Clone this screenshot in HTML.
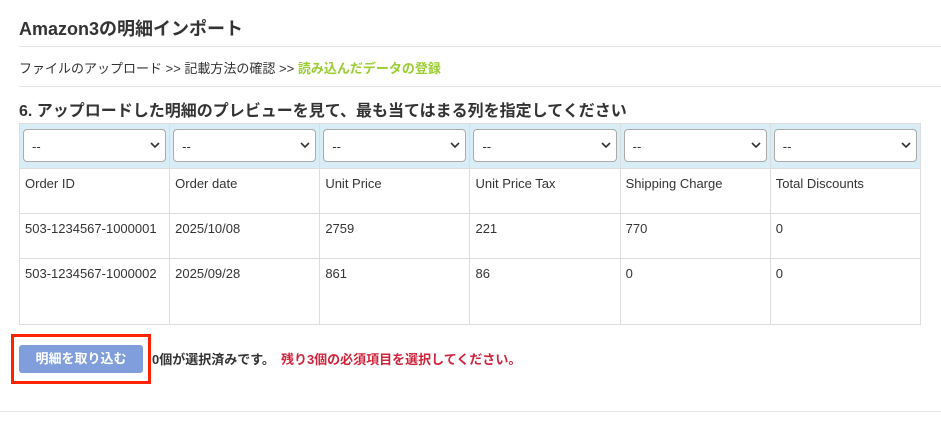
<!DOCTYPE html>
<html><head><meta charset="utf-8"><style>
body{margin:0;width:941px;height:431px;background:#fff;font-family:"Liberation Sans","Noto Sans CJK JP",sans-serif;color:#333;position:relative;overflow:hidden}
.a{position:absolute}
h1{position:absolute;left:19px;top:15px;margin:0;font-size:18px;font-weight:bold;color:#333}
.hr{position:absolute;left:19px;right:0;height:1px;background:#e5e5e5}
.bc{left:19px;top:58px;font-size:13px;color:#333}
.bc b{color:#9acd32}
.h6{left:19px;top:97px;font-size:16px;font-weight:bold}
table{position:absolute;left:19px;top:123px;width:902px;border-collapse:collapse;font-size:13px;table-layout:fixed}
td{border:1px solid #ddd;vertical-align:top;padding:0 5px}
tr.s td{background:#d9edf7;height:45px;padding:5px 3px;box-sizing:border-box}
.sel{height:33px;border:1px solid #aaa;border-radius:4px;background:#fff;position:relative;font-size:13px;line-height:33px;padding-left:8px;box-sizing:border-box}
.sel svg{position:absolute;right:5px;top:12px}
tr.r td{height:45px;padding-top:7px;box-sizing:border-box}
tr.r2 td{height:66px}
.box{left:11px;top:334px;width:134px;height:44px;border:3px solid #ff2200}
.btn{left:19px;top:345px;width:124px;height:28px;background:#7f9edb;border-radius:3px;color:#fff;font-weight:bold;font-size:13px;text-align:center;line-height:28px}
.msg{left:152px;top:349px;font-size:13px;font-weight:bold}
.msg span{color:#d0243c;margin-left:6px}
</style></head><body>
<h1>Amazon3の明細インポート</h1>
<div class="hr" style="top:46px"></div>
<div class="a bc">ファイルのアップロード &gt;&gt; 記載方法の確認 &gt;&gt; <b>読み込んだデータの登録</b></div>
<div class="hr" style="top:86px"></div>
<div class="a h6">6. アップロードした明細のプレビューを見て、最も当てはまる列を指定してください</div>
<table>
<tr class="s"><td><div class="sel">--<svg width="10" height="7"><path d="M1 1l4 4 4-4" stroke="#333" stroke-width="1.6" fill="none"/></svg></div></td><td><div class="sel">--<svg width="10" height="7"><path d="M1 1l4 4 4-4" stroke="#333" stroke-width="1.6" fill="none"/></svg></div></td><td><div class="sel">--<svg width="10" height="7"><path d="M1 1l4 4 4-4" stroke="#333" stroke-width="1.6" fill="none"/></svg></div></td><td><div class="sel">--<svg width="10" height="7"><path d="M1 1l4 4 4-4" stroke="#333" stroke-width="1.6" fill="none"/></svg></div></td><td><div class="sel">--<svg width="10" height="7"><path d="M1 1l4 4 4-4" stroke="#333" stroke-width="1.6" fill="none"/></svg></div></td><td><div class="sel">--<svg width="10" height="7"><path d="M1 1l4 4 4-4" stroke="#333" stroke-width="1.6" fill="none"/></svg></div></td></tr>
<tr class="r"><td>Order ID</td><td>Order date</td><td>Unit Price</td><td>Unit Price Tax</td><td>Shipping Charge</td><td>Total Discounts</td></tr>
<tr class="r"><td>503-1234567-1000001</td><td>2025/10/08</td><td>2759</td><td>221</td><td>770</td><td>0</td></tr>
<tr class="r r2"><td>503-1234567-1000002</td><td>2025/09/28</td><td>861</td><td>86</td><td>0</td><td>0</td></tr>
</table>
<div class="a box"></div>
<div class="a btn">明細を取り込む</div>
<div class="a msg">0個が選択済みです。<span>残り3個の必須項目を選択してください。</span></div>
<div class="hr" style="top:411px;left:0"></div>
</body></html>
